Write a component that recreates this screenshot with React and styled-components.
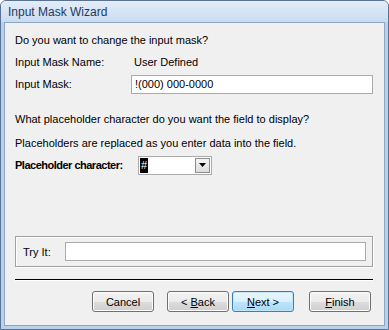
import React from "react";
import styled, { createGlobalStyle } from "styled-components";

const Global = createGlobalStyle`
    body {
        margin: 0;
        background: #ffffff;
        font-family: "Liberation Sans", Arial, sans-serif;
        font-size: 11px;
    }
`;

const Window = styled.div`
    width: 389px;
    height: 330px;
    box-sizing: border-box;
    display: flex;
    flex-direction: column;
    border: 1px solid #5a7394;
    border-radius: 6px 6px 0 0;
    background: #b9d1ea;
    overflow: hidden;
`;

const TitleBar = styled.div`
    height: 21px;
    padding-left: 7px;
    display: flex;
    align-items: center;
    background: linear-gradient(#e3edf9, #c9dbf1);
    color: #1e3a5e;
    font-size: 12px;
`;

const Body = styled.div`
    flex: 1;
    margin: 0 3px 3px 3px;
    border: 1px solid #8ea6c4;
    background: #f0f0f0;
    padding: 6px 11px 0 10px;
    display: flex;
    flex-direction: column;
    color: #000;
`;

const Line = styled.div`
    height: 22px;
    display: flex;
    align-items: center;
    white-space: nowrap;
    margin-top: ${p => p.top || 0}px;
`;

const Label = styled.span`
    width: ${p => p.w}px;
    flex-shrink: 0;
    font-weight: ${p => (p.bold ? "bold" : "normal")};
    letter-spacing: ${p => (p.bold ? "-0.5px" : "normal")};
`;

const TextBox = styled.div`
    flex: ${p => (p.grow ? 1 : "none")};
    height: 19px;
    box-sizing: border-box;
    border: 1px solid #ababab;
    background: #fff;
    display: flex;
    align-items: center;
    padding-left: 3px;
`;

const Combo = styled.div`
    width: 74px;
    height: 19px;
    box-sizing: border-box;
    border: 1px solid #ababab;
    background: #fff;
    display: flex;
    align-items: center;
    justify-content: space-between;
    padding: 1px;
`;

const Selected = styled.span`
    background: #000;
    color: #fff;
    padding: 0 1px;
    line-height: 15px;
`;

const DropButton = styled.div`
    width: 15px;
    height: 15px;
    box-sizing: border-box;
    border: 1px solid #8d8d8d;
    background: linear-gradient(#f5f5f5, #dcdcdc);
    display: flex;
    align-items: center;
    justify-content: center;
`;

const Group = styled.div`
    margin-top: 60px;
    height: 31px;
    box-sizing: border-box;
    border: 1px solid #a0a0a0;
    box-shadow: inset 1px 1px 0 #fff, 1px 1px 0 #fff;
    display: flex;
    align-items: center;
    padding: 0 6px 0 7px;
    gap: 14px;
`;

const Separator = styled.div`
    margin-top: 12px;
    height: 1px;
    background: #000;
    border-bottom: 1px solid #fff;
`;

const Buttons = styled.div`
    margin-top: 10px;
    display: flex;
    justify-content: flex-end;
    padding-right: 2px;
`;

const Button = styled.button`
    width: 62px;
    height: 21px;
    margin-left: ${p => p.gap}px;
    padding: 0;
    font-family: inherit;
    font-size: 11px;
    color: #000;
    border-radius: 3px;
    border: 1px solid ${p => (p.focus ? "#3c7fb1" : "#707070")};
    background: ${p =>
        p.focus
            ? "linear-gradient(#eaf6fd 0%, #d9f0fc 50%, #bee6fd 51%, #a7d9f5 100%)"
            : "linear-gradient(#f2f2f2 0%, #ebebeb 50%, #dddddd 51%, #cfcfcf 100%)"};
    box-shadow: inset 0 0 0 1px ${p => (p.focus ? "#c2e4f6" : "#fcfcfc")};
    u {
        text-decoration: underline;
    }
`;

const App = () => (
    <>
        <Global />
        <Window>
            <TitleBar>Input Mask Wizard</TitleBar>
            <Body>
                <Line>Do you want to change the input mask?</Line>
                <Line>
                    <Label w={119}>Input Mask Name:</Label>
                    User Defined
                </Line>
                <Line>
                    <Label w={116}>Input Mask:</Label>
                    <TextBox grow>!(000) 000-0000</TextBox>
                </Line>
                <Line top={13}>What placeholder character do you want the field to display?</Line>
                <Line top={2}>Placeholders are replaced as you enter data into the field.</Line>
                <Line>
                    <Label w={123} bold>Placeholder character:</Label>
                    <Combo>
                        <Selected>#</Selected>
                        <DropButton>
                            <svg width="7" height="4" viewBox="0 0 7 4">
                                <path d="M0 0h7L3.5 4z" fill="#000" />
                            </svg>
                        </DropButton>
                    </Combo>
                </Line>
                <Group>
                    <span>Try It:</span>
                    <TextBox grow />
                </Group>
                <Separator />
                <Buttons>
                    <Button gap={0}>Cancel</Button>
                    <Button gap={13}>&lt; <u>B</u>ack</Button>
                    <Button gap={3} focus>
                        <u>N</u>ext &gt;
                    </Button>
                    <Button gap={15}>
                        <u>F</u>inish
                    </Button>
                </Buttons>
            </Body>
        </Window>
    </>
);

export default App;
